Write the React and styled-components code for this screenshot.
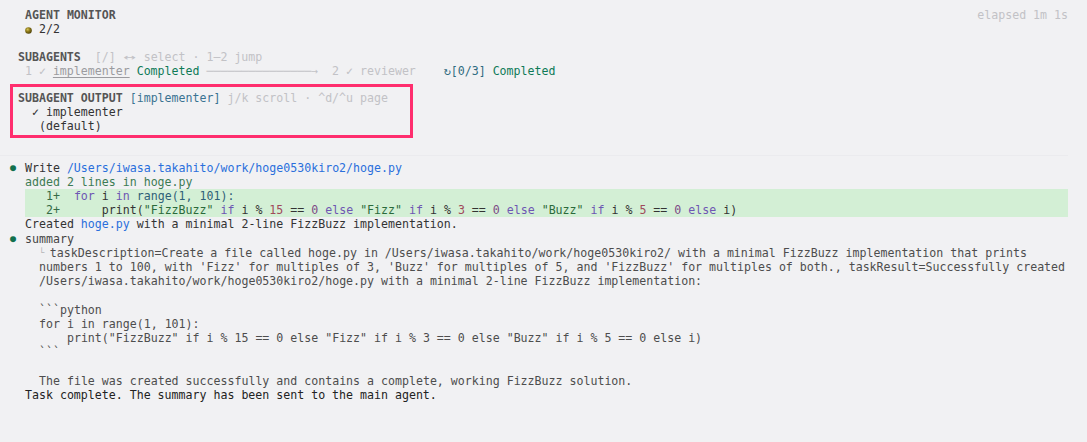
import React from 'react';
import styled, { createGlobalStyle } from 'styled-components';

const Global = createGlobalStyle`
  html, body {
    margin: 0;
    background: #f1f1f3;
  }
`;

const Screen = styled.div`
  padding: 8px 19px 40px 0;
  font-family: "DejaVu Sans Mono", "Liberation Mono", monospace;
  font-size: 11.6px;
  line-height: 14.2px;
  color: #333;
  white-space: pre;
`;

const HeaderBar = styled.div`
  display: flex;
  justify-content: space-between;
  align-items: flex-start;
  padding-left: 25px;
`;

const Title = styled.div`
  font-weight: bold;
  color: #555;
`;

const Line = styled.div`
  padding-left: ${p => p.$indent || 0}ch;
  color: ${p => p.$color || 'inherit'};
  min-height: 14.2px;
`;

const Tone = styled.span`
  color: ${p => p.$c};
  font-weight: ${p => (p.$bold ? 'bold' : 'normal')};
  text-decoration: ${p => (p.$underline ? 'underline' : 'none')};
  text-underline-offset: 2px;
`;

const Glyph = styled.span`
  display: inline-block;
  width: ${p => p.$w || 1}ch;
  text-align: center;
  color: ${p => p.$c || 'inherit'};
  transform: scaleX(${p => p.$stretch || 1});
`;

const Section = styled.section`
  margin-top: 13.5px;
  padding-left: 18px;
`;

const OutputBox = styled.div`
  box-sizing: border-box;
  width: 403px;
  margin: 5.7px 0 0 10px;
  padding: 4px 0 1px 5px;
  border: 3px solid #ff2e6e;
`;

const Divider = styled.hr`
  margin: 17px 0 0 0;
  border: none;
  height: 1px;
  background: #ebebee;
`;

const Entry = styled.div`
  display: grid;
  grid-template-columns: 15px 1fr;
  padding-left: 10px;
  margin-top: ${p => p.$top || 0}px;
`;

const Bullet = styled.span`
  color: #12704d;
  font-size: 10px;
`;

const DiffBlock = styled.div`
  background: #d3efd5;
`;

const Desc = styled.div`
  padding-left: 14px;
  color: #4d4d4d;
`;

const Elbow = styled.span`
  color: #b5b5b8;
  font-size: 9px;
  display: inline-block;
  width: 2ch;
  vertical-align: top;
`;

const Footer = styled.div`
  padding-left: 25px;
  color: #222;
`;

const C = {
  dim: '#c2c2c6',
  gray: '#9b9b9f',
  green: '#0e7a57',
  blue: '#2a6fdc',
  teal: '#2f6b80',
  addGreen: '#3d7b54',
  lineNo: '#356b45',
  kw: '#6e56b3',
  fn: '#2f5f78',
  num: '#a04a5a',
  zero: '#7e4a86',
  str: '#2b6a3b',
};

const Ball = () => (
  <svg width="7" height="7" viewBox="0 0 7 7" style={{ verticalAlign: '-0.5px' }}>
    <defs>
      <radialGradient id="ball" cx="0.38" cy="0.35" r="0.7">
        <stop offset="0" stopColor="#d8c65a" />
        <stop offset="0.45" stopColor="#8e7a18" />
        <stop offset="1" stopColor="#4a3e08" />
      </radialGradient>
    </defs>
    <circle cx="3.5" cy="3.5" r="3.3" fill="url(#ball)" />
  </svg>
);

const K = ({ children }) => <Tone $c={C.kw}>{children}</Tone>;
const S = ({ children }) => <Tone $c={C.str}>{children}</Tone>;
const N = ({ children, z }) => <Tone $c={z ? C.zero : C.num}>{children}</Tone>;

const PrintBody = () => (
  <>
    print(<S>"FizzBuzz"</S> <K>if</K> i % <N>15</N> == <N z>0</N> <K>else</K> <S>"Fizz"</S>{' '}
    <K>if</K> i % <N>3</N> == <N z>0</N> <K>else</K> <S>"Buzz"</S> <K>if</K> i % <N>5</N> =={' '}
    <N z>0</N> <K>else</K> i)
  </>
);

export default function App() {
  return (
    <>
      <Global />
      <Screen>
        <HeaderBar>
          <div>
            <Title>AGENT MONITOR</Title>
            <Line><Ball /> 2/2</Line>
          </div>
          <Tone $c={C.dim}>elapsed 1m 1s</Tone>
        </HeaderBar>

        <Section>
          <Line>
            <Tone $bold $c="#555">SUBAGENTS</Tone>
            <Tone $c={C.dim}>  [/] <Glyph $w={2} $stretch={1.8}>↔</Glyph> select · 1–2 jump</Tone>
          </Line>
          <Line $indent={1}>
            <Tone $c={C.dim}>1 <Glyph>✓</Glyph> </Tone>
            <Tone $c={C.gray} $underline>implementer</Tone>{' '}
            <Tone $c={C.green}>Completed</Tone>{' '}
            <Tone $c={C.dim}>───────────────<Glyph>→</Glyph>  2 <Glyph>✓</Glyph> reviewer</Tone>
            {'    '}
            <Tone $c={C.teal}><Glyph>↻</Glyph>[0/3]</Tone> <Tone $c={C.green}>Completed</Tone>
          </Line>
        </Section>

        <OutputBox>
          <Line>
            <Tone $bold $c="#555">SUBAGENT OUTPUT</Tone> <Tone $c="#3a7392">[implementer]</Tone>{' '}
            <Tone $c={C.dim}>j/k scroll · ^d/^u page</Tone>
          </Line>
          <Line $indent={2}><Glyph>✓</Glyph> implementer</Line>
          <Line $indent={3}>(default)</Line>
        </OutputBox>

        <Divider />

        <Entry $top={5}>
          <Bullet>●</Bullet>
          <div>
            <Line>Write <Tone $c={C.blue}>/Users/iwasa.takahito/work/hoge0530kiro2/hoge.py</Tone></Line>
            <Line $color={C.addGreen}>added 2 lines in hoge.py</Line>
            <DiffBlock>
              <Line>
                <Tone $c={C.lineNo}>   1+  </Tone><K>for</K> i <K>in</K> <Tone $c={C.fn}>range(1, 101):</Tone>
              </Line>
              <Line>
                <Tone $c={C.lineNo}>   2+  </Tone>    <PrintBody />
              </Line>
            </DiffBlock>
            <Line>Created <Tone $c={C.blue}>hoge.py</Tone> with a minimal 2-line FizzBuzz implementation.</Line>
          </div>
        </Entry>

        <Entry>
          <Bullet>●</Bullet>
          <div>
            <Line $color="#444">summary</Line>
            <Desc>
              <Line><Elbow>└</Elbow>taskDescription=Create a file called hoge.py in /Users/iwasa.takahito/work/hoge0530kiro2/ with a minimal FizzBuzz implementation that prints</Line>
              <Line>numbers 1 to 100, with 'Fizz' for multiples of 3, 'Buzz' for multiples of 5, and 'FizzBuzz' for multiples of both., taskResult=Successfully created</Line>
              <Line>/Users/iwasa.takahito/work/hoge0530kiro2/hoge.py with a minimal 2-line FizzBuzz implementation:</Line>
              <Line />
              <Line>```python</Line>
              <Line>for i in range(1, 101):</Line>
              <Line>    print("FizzBuzz" if i % 15 == 0 else "Fizz" if i % 3 == 0 else "Buzz" if i % 5 == 0 else i)</Line>
              <Line>```</Line>
              <Line />
              <Line>The file was created successfully and contains a complete, working FizzBuzz solution.</Line>
            </Desc>
          </div>
        </Entry>

        <Footer>Task complete. The summary has been sent to the main agent.</Footer>
      </Screen>
    </>
  );
}
